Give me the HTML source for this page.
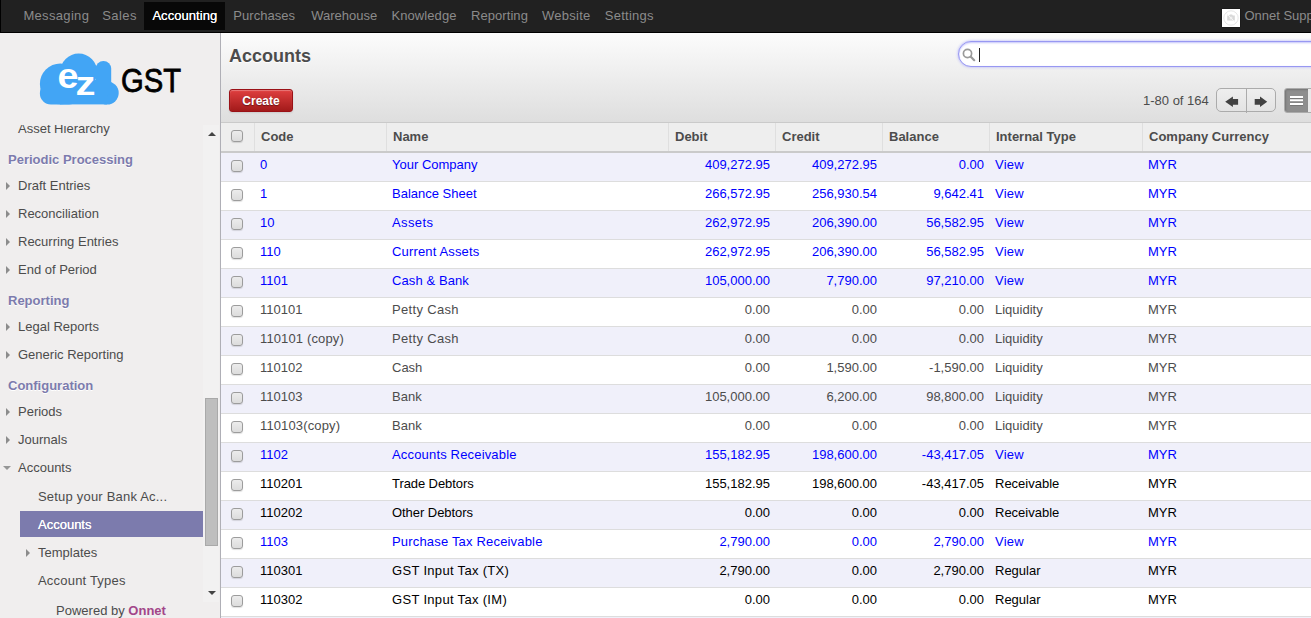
<!DOCTYPE html>
<html><head><meta charset="utf-8"><title>Accounts</title>
<style>
*{box-sizing:border-box;}
html,body{margin:0;padding:0;width:1311px;height:618px;overflow:hidden;background:#fff;font-family:"Liberation Sans",Arial,sans-serif;font-size:13px;color:#4c4c4c;}
#top{position:absolute;left:0;top:0;width:1311px;height:33px;background:#212121;border-bottom:1px solid #000;box-shadow:inset 1px 0 0 #000;}
#top ul{list-style:none;margin:0;padding:0;}
#top li{position:absolute;top:0;white-space:nowrap;height:28px;margin-top:2px;padding:0 8px;line-height:27px;color:#8b8b8b;font-size:13px;}
#top li.act{padding-left:8.4px;background:#080808;color:#fff;font-weight:normal;text-shadow:0 0 0.6px #fff;}
#user{position:absolute;right:0;top:0;height:32px;}
#user .av{position:absolute;left:1222px;top:9px;width:18px;height:18px;background:#fff;}
#left{position:absolute;left:0;top:33px;width:221px;height:585px;background:#f0eeee;border-right:1px solid #afafb6;}
#main{position:absolute;left:221px;top:33px;width:1090px;height:585px;}
#hdr{position:absolute;left:0;top:0;width:1090px;height:89px;background:linear-gradient(#fcfcfc,#dedede);}
#hdr h2{position:absolute;left:8px;top:13px;margin:0;font-size:18px;font-weight:bold;color:#4c4c4c;line-height:20px;text-shadow:0 1px 1px #fff;}
#create{position:absolute;left:8px;top:56px;width:64px;height:23px;border:1px solid #9a1117;border-radius:3px;background:linear-gradient(#df3f3f,#a21a1a);color:#fff;font-weight:bold;font-size:12px;line-height:22px;text-align:center;text-shadow:0 1px 1px rgba(0,0,0,.4);box-shadow:0 1px 2px rgba(0,0,0,.1),0 1px 1px rgba(255,255,255,.3) inset;}
table{position:absolute;left:0;top:89px;border-collapse:separate;border-spacing:0;width:1090px;table-layout:fixed;}
th{height:31px;background:#eee;border-top:1px solid #cacaca;border-bottom:2px solid #cacaca;box-shadow:inset 1px 0 0 #dfdfdf;text-align:left;padding:0 6px 1px 7px;font-weight:bold;color:#4c4c4c;font-size:13px;}
td{height:29px;border-bottom:1px solid #ddd;padding:0 6px 6px 6px;white-space:nowrap;overflow:hidden;}
td.n{text-align:right;padding-right:5px;}
td.c0{padding:0 6px 4px 6px;}
th .cb{margin-top:0;position:relative;top:-1px;}
tr.odd td{background:#f0f0fa;}
tr.b td{color:#0000ff;}
tr.g td{color:#4c4c4c;}
tr.k td{color:#000;}
.cb{display:block;width:12px;height:12px;border:1px solid #9c9c9c;border-radius:3px;background:linear-gradient(#ececec,#dcdcdc);margin:1px 0 0 4px;box-shadow:0 1px 1px rgba(0,0,0,.12);}

#scroll{position:absolute;left:0;top:92px;width:220px;height:477px;overflow:hidden;}
#scroll .it{position:absolute;left:0;width:203px;height:26px;line-height:26px;color:#4c4c4c;font-size:13px;white-space:nowrap;}
#scroll .it .t{position:absolute;left:18px;top:0;}
#scroll .it.l2 .t{left:38px;}
#scroll .it.ar:before{content:"";position:absolute;left:6px;top:9px;border-left:4px solid #8c8c8c;border-top:4px solid transparent;border-bottom:4px solid transparent;}
#scroll .it.l2.ar:before{left:26px;}
#scroll .it.ad:before{content:"";position:absolute;left:2.5px;top:11px;border-top:4px solid #969696;border-left:4px solid transparent;border-right:4px solid transparent;}
#scroll .it.on{left:20px;width:183px;background:#7c7bad;color:#fff;font-weight:normal;}
#scroll .it.on .t{left:18px;top:1px;text-shadow:0 0 0.5px #fff;}
#scroll .sec{position:absolute;left:8px;height:20px;line-height:20px;font-weight:bold;color:#7c7bad;font-size:13px;text-shadow:0 1px 0 #fff;white-space:nowrap;}
#sb{position:absolute;left:203px;top:0;width:16px;height:477px;background:#f2f1f1;}
#sb .up{position:absolute;left:5px;top:7px;border-bottom:4px solid #444;border-left:4px solid transparent;border-right:4px solid transparent;}
#sb .dn{position:absolute;left:5px;top:466px;border-top:4px solid #444;border-left:4px solid transparent;border-right:4px solid transparent;}
#sb .thumb{position:absolute;left:2px;top:273px;width:13px;height:148px;background:#bebebe;border:1px solid #a9a9a9;}
#foot{position:absolute;left:0;top:568px;width:220px;height:20px;line-height:20px;text-align:center;color:#4c4c4c;font-size:13px;padding-left:2px;}
#foot b{color:#a24689;}
#search{position:absolute;left:737px;top:8px;width:400px;height:26px;border:1px solid #9898f2;border-radius:13px;background:#fff;box-shadow:0 0 3px #b0b0fa, 0 1px 2px rgba(150,150,245,.55) inset;}
#search .cur{position:absolute;left:20px;top:6px;width:1px;height:14px;background:#222;}
#pager{position:absolute;left:922px;top:57px;height:24px;line-height:22px;color:#4c4c4c;font-size:13px;white-space:nowrap;}
#pbtn{position:absolute;left:995px;top:55px;width:60px;height:24px;border:1px solid #ababab;border-radius:5px;background:linear-gradient(#eeeeee,#e3e3e3);}
#pbtn:before{content:"";position:absolute;left:29px;top:0;width:1px;height:24px;background:#ababab;}
#vsw{position:absolute;left:1063px;top:55px;width:40px;height:25px;border:1px solid #ababab;border-radius:3px 0 0 3px;background:#e9e9e9;overflow:hidden;}
</style></head><body>
<div id="top"><ul>
<li style="left:15.4px;letter-spacing:0.33px">Messaging</li><li style="left:94.3px;letter-spacing:0.4px">Sales</li><li class="act" style="left:144px;width:81px;letter-spacing:0.05px">Accounting</li><li style="left:225.3px;letter-spacing:0.05px">Purchases</li><li style="left:303.2px;letter-spacing:0px">Warehouse</li><li style="left:383.4px;letter-spacing:0.09px">Knowledge</li><li style="left:463.1px;letter-spacing:0.05px">Reporting</li><li style="left:533.9px;letter-spacing:0.28px">Website</li><li style="left:596.8px;letter-spacing:0.25px">Settings</li>
</ul>
<div class="av" style="position:absolute;left:1222px;top:9px;width:18px;height:18px;background:#fff;box-shadow:0 0 1px #000"><svg width="18" height="18" viewBox="0 0 18 18" style="display:block"><circle cx="9" cy="9" r="7.2" fill="none" stroke="#e6e6e6" stroke-width="1"/><path d="M5.2 6.6h2l.7-1h2.2l.7 1h2v4.9h-7.6z" fill="#d8d8d8"/><circle cx="9" cy="9" r="1.5" fill="#eee"/><path d="M4.2 4.2L13.8 13.8" stroke="#f4f4f4" stroke-width="1"/></svg></div>
<div style="position:absolute;left:1244.4px;top:0;line-height:32px;color:#8b8b8b;white-space:nowrap">Onnet Support</div>
</div>
<div id="left">
<svg id="logo" width="150" height="56" viewBox="0 0 150 56" style="position:absolute;left:36px;top:19px">
<g fill="#42a5f5">
<circle cx="24.3" cy="31.9" r="20.4"/><circle cx="42.7" cy="20" r="18.5"/><circle cx="71.2" cy="41" r="11.5"/>
<rect x="3.9" y="30" width="40" height="22.4" rx="11"/>
<rect x="59.7" y="8.9" width="15.5" height="36" rx="7.7"/>
<rect x="24" y="28" width="47" height="24.4"/>
</g>
<text x="21.5" y="36.3" font-family="Liberation Sans,Arial,sans-serif" font-weight="bold" font-size="35" fill="#fff" textLength="21" lengthAdjust="spacingAndGlyphs">e</text>
<text x="39.5" y="42.6" font-family="Liberation Sans,Arial,sans-serif" font-weight="bold" font-size="33" fill="#fff" textLength="20" lengthAdjust="spacingAndGlyphs">z</text>
<text x="85" y="40.4" font-family="Liberation Sans,Arial,sans-serif" font-size="34" fill="#000" stroke="#000" stroke-width="0.8" textLength="60" lengthAdjust="spacingAndGlyphs">GST</text>
</svg>
<div id="scroll">
<div class="it" style="top:-9px"><span class="t" style="left:18px">Asset Hierarchy</span></div>
<div class="sec" style="top:25px">Periodic Processing</div>
<div class="it ar" style="top:48px"><span class="t">Draft Entries</span></div>
<div class="it ar" style="top:76px"><span class="t">Reconciliation</span></div>
<div class="it ar" style="top:104px"><span class="t">Recurring Entries</span></div>
<div class="it ar" style="top:132px"><span class="t">End of Period</span></div>
<div class="sec" style="top:166px">Reporting</div>
<div class="it ar" style="top:189px"><span class="t">Legal Reports</span></div>
<div class="it ar" style="top:217px"><span class="t">Generic Reporting</span></div>
<div class="sec" style="top:251px">Configuration</div>
<div class="it ar" style="top:274px"><span class="t">Periods</span></div>
<div class="it ar" style="top:302px"><span class="t">Journals</span></div>
<div class="it ad" style="top:330px"><span class="t">Accounts</span></div>
<div class="it l2" style="top:359px"><span class="t" style="letter-spacing:0.2px">Setup your Bank Ac...</span></div>
<div class="it l2 on" style="top:386px"><span class="t">Accounts</span></div>
<div class="it l2 ar" style="top:415px"><span class="t">Templates</span></div>
<div class="it l2" style="top:443px"><span class="t" style="letter-spacing:0.2px">Account Types</span></div>
<div id="sb"><i class="up"></i><i class="thumb"></i><i class="dn"></i></div>
</div>
<div id="foot">Powered by <b>Onnet</b></div>
</div>
<div id="main">
<div id="hdr"><h2>Accounts</h2><div id="create">Create</div><div id="search"><svg width="16" height="16" viewBox="0 0 16 16" style="position:absolute;left:1.8px;top:4.7px"><circle cx="6.5" cy="6.5" r="4.1" fill="none" stroke="#9a9a9a" stroke-width="1.7"/><path d="M9.8 9.8 L13.2 13.2" stroke="#9a9a9a" stroke-width="2.2" stroke-linecap="round"/></svg><span class="cur"></span></div>
<div id="pager">1-80 of 164</div>
<div id="pbtn"><svg width="60" height="22" viewBox="0 0 60 22" style="position:absolute;left:-2px;top:0"><path d="M10.2 12.8 L17.9 7.6 V10 H23.1 V15.7 H17.9 V18.1 Z" fill="#424242"/><path d="M52.2 12.8 L45 7.6 V10 H39.7 V15.7 H45 V18.1 Z" fill="#424242"/></svg></div>
<div id="vsw"><span style="position:absolute;left:0;top:0;width:23px;height:23px;background:#8e8e8e;box-shadow:1px 1px 2px rgba(0,0,0,.18) inset"></span><svg width="24" height="22" viewBox="0 0 24 22" style="position:absolute;left:0;top:1px"><g fill="#777"><rect x="5" y="7" width="13" height="2"/><rect x="5" y="10.3" width="13" height="2"/><rect x="5" y="14" width="13" height="2"/></g><g fill="#fff"><rect x="5" y="6" width="13" height="2"/><rect x="5" y="9.3" width="13" height="2"/><rect x="5" y="13" width="13" height="2"/></g></svg></div>
</div>
<table>
<colgroup><col style="width:33px"><col style="width:132px"><col style="width:282px"><col style="width:107px"><col style="width:107px"><col style="width:107px"><col style="width:153px"><col></colgroup>
<thead><tr><th style="box-shadow:none;padding-left:6px"><span class="cb"></span></th><th>Code</th><th>Name</th><th>Debit</th><th>Credit</th><th>Balance</th><th>Internal Type</th><th>Company Currency</th></tr></thead>
<tbody>
<tr class="b odd"><td class="c0"><span class="cb"></span></td><td>0</td><td>Your Company</td><td class="n">409,272.95</td><td class="n">409,272.95</td><td class="n">0.00</td><td style="letter-spacing:0.25px">View</td><td>MYR</td></tr>
<tr class="b"><td class="c0"><span class="cb"></span></td><td>1</td><td>Balance Sheet</td><td class="n">266,572.95</td><td class="n">256,930.54</td><td class="n">9,642.41</td><td style="letter-spacing:0.25px">View</td><td>MYR</td></tr>
<tr class="b odd"><td class="c0"><span class="cb"></span></td><td>10</td><td style="letter-spacing:0.4px">Assets</td><td class="n">262,972.95</td><td class="n">206,390.00</td><td class="n">56,582.95</td><td style="letter-spacing:0.25px">View</td><td>MYR</td></tr>
<tr class="b"><td class="c0"><span class="cb"></span></td><td>110</td><td style="letter-spacing:0.15px">Current Assets</td><td class="n">262,972.95</td><td class="n">206,390.00</td><td class="n">56,582.95</td><td style="letter-spacing:0.25px">View</td><td>MYR</td></tr>
<tr class="b odd"><td class="c0"><span class="cb"></span></td><td>1101</td><td style="letter-spacing:0.1px">Cash &amp; Bank</td><td class="n">105,000.00</td><td class="n">7,790.00</td><td class="n">97,210.00</td><td style="letter-spacing:0.25px">View</td><td>MYR</td></tr>
<tr class="g"><td class="c0"><span class="cb"></span></td><td>110101</td><td style="letter-spacing:0.33px">Petty Cash</td><td class="n">0.00</td><td class="n">0.00</td><td class="n">0.00</td><td>Liquidity</td><td>MYR</td></tr>
<tr class="g odd"><td class="c0"><span class="cb"></span></td><td style="letter-spacing:0.13px">110101 (copy)</td><td style="letter-spacing:0.33px">Petty Cash</td><td class="n">0.00</td><td class="n">0.00</td><td class="n">0.00</td><td>Liquidity</td><td>MYR</td></tr>
<tr class="g"><td class="c0"><span class="cb"></span></td><td>110102</td><td>Cash</td><td class="n">0.00</td><td class="n">1,590.00</td><td class="n">-1,590.00</td><td>Liquidity</td><td>MYR</td></tr>
<tr class="g odd"><td class="c0"><span class="cb"></span></td><td>110103</td><td>Bank</td><td class="n">105,000.00</td><td class="n">6,200.00</td><td class="n">98,800.00</td><td>Liquidity</td><td>MYR</td></tr>
<tr class="g"><td class="c0"><span class="cb"></span></td><td style="letter-spacing:0.13px">110103(copy)</td><td>Bank</td><td class="n">0.00</td><td class="n">0.00</td><td class="n">0.00</td><td>Liquidity</td><td>MYR</td></tr>
<tr class="b odd"><td class="c0"><span class="cb"></span></td><td>1102</td><td style="letter-spacing:0.17px">Accounts Receivable</td><td class="n">155,182.95</td><td class="n">198,600.00</td><td class="n">-43,417.05</td><td style="letter-spacing:0.25px">View</td><td>MYR</td></tr>
<tr class="k"><td class="c0"><span class="cb"></span></td><td>110201</td><td style="letter-spacing:-0.08px">Trade Debtors</td><td class="n">155,182.95</td><td class="n">198,600.00</td><td class="n">-43,417.05</td><td>Receivable</td><td>MYR</td></tr>
<tr class="k odd"><td class="c0"><span class="cb"></span></td><td>110202</td><td style="letter-spacing:-0.05px">Other Debtors</td><td class="n">0.00</td><td class="n">0.00</td><td class="n">0.00</td><td>Receivable</td><td>MYR</td></tr>
<tr class="b"><td class="c0"><span class="cb"></span></td><td>1103</td><td style="letter-spacing:0.18px">Purchase Tax Receivable</td><td class="n">2,790.00</td><td class="n">0.00</td><td class="n">2,790.00</td><td style="letter-spacing:0.25px">View</td><td>MYR</td></tr>
<tr class="k odd"><td class="c0"><span class="cb"></span></td><td>110301</td><td style="letter-spacing:0.32px">GST Input Tax (TX)</td><td class="n">2,790.00</td><td class="n">0.00</td><td class="n">2,790.00</td><td>Regular</td><td>MYR</td></tr>
<tr class="k"><td class="c0"><span class="cb"></span></td><td>110302</td><td style="letter-spacing:0.32px">GST Input Tax (IM)</td><td class="n">0.00</td><td class="n">0.00</td><td class="n">0.00</td><td>Regular</td><td>MYR</td></tr>
<tr class="k odd"><td class="c0"><span class="cb"></span></td><td>&nbsp;</td><td>&nbsp;</td><td class="n">&nbsp;</td><td class="n">&nbsp;</td><td class="n">&nbsp;</td><td>&nbsp;</td><td>&nbsp;</td></tr>
</tbody></table>
</div>
</body></html>
